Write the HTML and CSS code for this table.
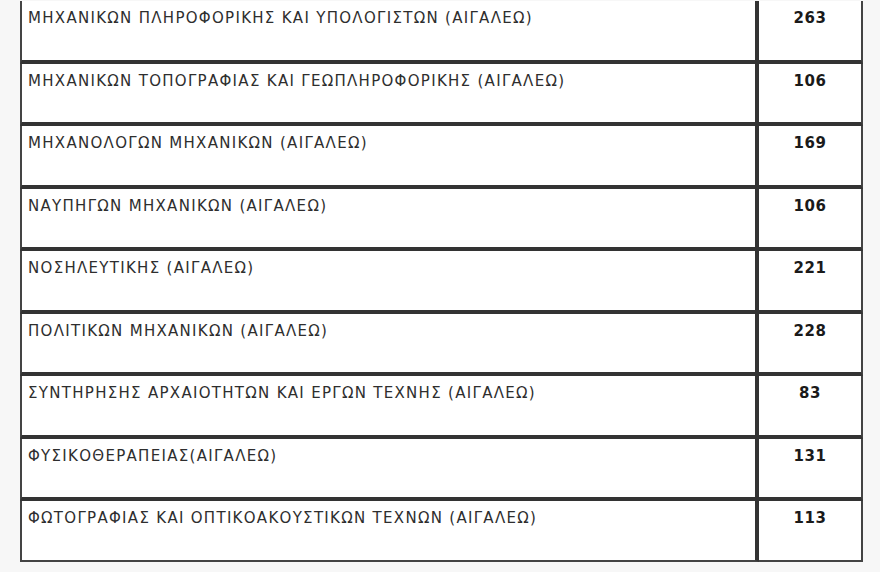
FILE: index.html
```html
<!DOCTYPE html>
<html lang="el">
<head>
<meta charset="utf-8">
<title>Σχολές</title>
<link rel="stylesheet" href="styles.css">
</head>
<body>
<table class="grid">
<tbody>
<tr><td class="name">ΜΗΧΑΝΙΚΩΝ ΠΛΗΡΟΦΟΡΙΚΗΣ ΚΑΙ ΥΠΟΛΟΓΙΣΤΩΝ (ΑΙΓΑΛΕΩ)</td><td class="num">263</td></tr>
<tr><td class="name">ΜΗΧΑΝΙΚΩΝ ΤΟΠΟΓΡΑΦΙΑΣ ΚΑΙ ΓΕΩΠΛΗΡΟΦΟΡΙΚΗΣ (ΑΙΓΑΛΕΩ)</td><td class="num">106</td></tr>
<tr><td class="name">ΜΗΧΑΝΟΛΟΓΩΝ ΜΗΧΑΝΙΚΩΝ (ΑΙΓΑΛΕΩ)</td><td class="num">169</td></tr>
<tr><td class="name">ΝΑΥΠΗΓΩΝ ΜΗΧΑΝΙΚΩΝ (ΑΙΓΑΛΕΩ)</td><td class="num">106</td></tr>
<tr><td class="name">ΝΟΣΗΛΕΥΤΙΚΗΣ (ΑΙΓΑΛΕΩ)</td><td class="num">221</td></tr>
<tr><td class="name">ΠΟΛΙΤΙΚΩΝ ΜΗΧΑΝΙΚΩΝ (ΑΙΓΑΛΕΩ)</td><td class="num">228</td></tr>
<tr><td class="name">ΣΥΝΤΗΡΗΣΗΣ ΑΡΧΑΙΟΤΗΤΩΝ ΚΑΙ ΕΡΓΩΝ ΤΕΧΝΗΣ (ΑΙΓΑΛΕΩ)</td><td class="num">83</td></tr>
<tr><td class="name">ΦΥΣΙΚΟΘΕΡΑΠΕΙΑΣ(ΑΙΓΑΛΕΩ)</td><td class="num">131</td></tr>
<tr><td class="name">ΦΩΤΟΓΡΑΦΙΑΣ ΚΑΙ ΟΠΤΙΚΟΑΚΟΥΣΤΙΚΩΝ ΤΕΧΝΩΝ (ΑΙΓΑΛΕΩ)</td><td class="num">113</td></tr>
</tbody>
</table>
</body>
</html>
```

FILE: styles.css
```css
html, body {
  margin: 0;
  padding: 0;
  background: #f7f7f7;
}
body {
  padding: 1px 0 0 20px;
  font-family: "DejaVu Sans", "Noto Sans", sans-serif;
  color: #2e2e2e;
}
.grid {
  border-collapse: separate;
  border-spacing: 0;
  width: 843px;
  background: #ffffff;
}
.grid td {
  height: 49.5px;
  padding: 9px 6px 0;
  vertical-align: top;
  box-sizing: content-box;
  border-bottom: 4px solid #333333;
  font-size: 15px;
  line-height: 17px;
}
.grid tr:last-child td {
  border-bottom: 2px solid #444444;
}
.grid td.name {
  border-left: 2px solid #444444;
  border-right: 4px solid #333333;
  width: 721px;
  letter-spacing: 1.3px;
  padding-left: 6px;
}
.grid td.num {
  border-right: 2px solid #444444;
  text-align: center;
  font-weight: bold;
  font-size: 15px;
  letter-spacing: 0.6px;
  color: #1a1a1a;
}
```
